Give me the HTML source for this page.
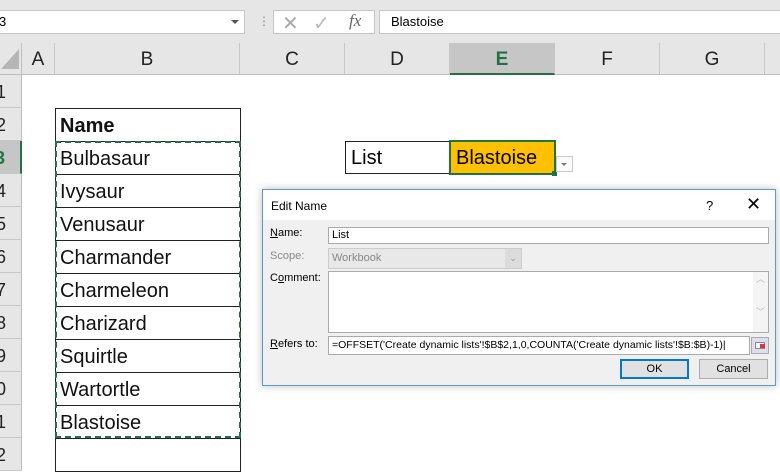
<!DOCTYPE html><html><head><style>
*{margin:0;padding:0;box-sizing:border-box}
body{width:780px;height:470px;overflow:hidden;background:#fff;font-family:"Liberation Sans",sans-serif;position:relative}
.a{position:absolute}
.ch{position:absolute;top:43px;height:32px;background:#e6e6e6;border-right:1px solid #c8c8c8;border-bottom:1px solid #bdbdbd;font-size:19px;text-align:center;line-height:34px;color:#222}
.rh{position:absolute;left:0;width:22px;height:33px;background:#e6e6e6;border-bottom:1px solid #c8c8c8;border-right:1px solid #bdbdbd;font-size:18px;line-height:34px;text-align:right;padding-right:15px;color:#222;overflow:hidden;white-space:nowrap;direction:rtl}
.cell{position:absolute;left:55px;width:186px;height:34px;border:1px solid #222;font-size:20px;line-height:34px;padding-left:4px;color:#111}
.d{font-size:11px;color:#000}
</style></head><body>
<div class="a" style="left:0;top:0;width:780px;height:43px;background:#e6e6e6"></div>
<div class="a" style="left:-2px;top:10px;width:247px;height:24px;background:#fff;border:1px solid #c6c6c6;font-size:13px;line-height:22px">3</div>
<div class="a" style="left:231px;top:20px;border-left:4px solid transparent;border-right:4px solid transparent;border-top:4px solid #555"></div>
<div class="a" style="left:258px;top:14px;color:#888;font-size:12px">⋮</div>
<div class="a" style="left:273px;top:10px;width:102px;height:24px;background:#fff;border:1px solid #c6c6c6"></div>
<div class="a" style="left:282px;top:11px;color:#aaa;font-size:20px">✕</div>
<div class="a" style="left:313px;top:11px;color:#bbb;font-size:20px">✓</div>
<div class="a" style="left:349px;top:11px;color:#666;font-size:17px;font-style:italic;font-family:'Liberation Serif',serif">fx</div>
<div class="a" style="left:379px;top:10px;width:410px;height:24px;background:#fff;border:1px solid #c6c6c6;font-size:13px;line-height:22px;padding-left:11px">Blastoise</div>
<div class="a" style="left:0;top:43px;width:22px;height:32px;background:#e6e6e6;border-right:1px solid #bdbdbd;border-bottom:1px solid #bdbdbd"></div>
<div class="a" style="left:1px;top:49px;border-left:18px solid transparent;border-bottom:20px solid #b5b5b5"></div>
<div class="ch" style="left:22px;width:33px">A</div>
<div class="ch" style="left:55px;width:185px">B</div>
<div class="ch" style="left:240px;width:105px">C</div>
<div class="ch" style="left:345px;width:105px">D</div>
<div class="ch" style="left:450px;width:105px;background:#c6c6c6;color:#217346;font-weight:bold;border-bottom:2px solid #217346">E</div>
<div class="ch" style="left:555px;width:105px">F</div>
<div class="ch" style="left:660px;width:105px">G</div>
<div class="ch" style="left:765px;width:20px"></div>
<div class="rh" style="top:75px">1</div><div class="rh" style="top:108px">2</div>
<div class="rh" style="top:141px;background:#c6c6c6;color:#217346;font-weight:bold;border-right:2px solid #217346">3</div>
<div class="rh" style="top:174px">4</div><div class="rh" style="top:207px">5</div><div class="rh" style="top:240px">6</div><div class="rh" style="top:273px">7</div><div class="rh" style="top:306px">8</div><div class="rh" style="top:339px">9</div><div class="rh" style="top:372px">10</div><div class="rh" style="top:405px">11</div><div class="rh" style="top:438px">12</div>
<div class="cell" style="top:108px;font-weight:bold">Name</div>
<div class="cell" style="top:141px">Bulbasaur</div>
<div class="cell" style="top:174px">Ivysaur</div>
<div class="cell" style="top:207px">Venusaur</div>
<div class="cell" style="top:240px">Charmander</div>
<div class="cell" style="top:273px">Charmeleon</div>
<div class="cell" style="top:306px">Charizard</div>
<div class="cell" style="top:339px">Squirtle</div>
<div class="cell" style="top:372px">Wartortle</div>
<div class="cell" style="top:405px">Blastoise</div>
<div class="cell" style="top:438px"></div>
<div class="a" style="left:55px;top:141px;width:186px;height:297px;border:2px dashed #217346"></div>
<div class="a" style="left:345px;top:141px;width:106px;height:33px;border:1px solid #222;font-size:20px;line-height:33px;padding-left:5px">List</div>
<div class="a" style="left:449px;top:140px;width:107px;height:35px;background:#ffc000;border:2px solid #217346;font-size:20px;line-height:33px;padding-left:5px">Blastoise</div>
<div class="a" style="left:552px;top:171px;width:5px;height:5px;background:#217346"></div>
<div class="a" style="left:556px;top:156px;width:17px;height:16px;border:1px solid #ccc;background:#fafafa"></div>
<div class="a" style="left:561px;top:163px;border-left:3px solid transparent;border-right:3px solid transparent;border-top:3px solid #777"></div>
<div class="a" style="left:262px;top:189px;width:514px;height:197px;background:#f0f0f0;border:1px solid #5a9bd5;box-shadow:0 0 8px rgba(0,0,0,.25)">
<div class="a" style="left:0;top:0;width:512px;height:30px;background:#fff"></div>
<div class="a d" style="left:8px;top:9px;font-size:12px">Edit Name</div>
<div class="a d" style="left:443px;top:8px;font-size:13px">?</div>
<div class="a d" style="left:483px;top:4px;font-size:18px">✕</div>
<div class="a d" style="left:7px;top:37px"><u>N</u>ame:</div>
<div class="a" style="left:65px;top:37px;width:441px;height:17px;background:#fff;border:1px solid #aaa;font-size:11px;padding-left:3px;line-height:15px">List</div>
<div class="a d" style="left:7px;top:60px;color:#888">Scope:</div>
<div class="a" style="left:65px;top:58px;width:194px;height:21px;background:#e8e8e8;border:1px solid #ccc;font-size:11px;color:#888;padding-left:3px;line-height:19px">Workbook</div>
<div class="a" style="left:242px;top:59px;width:16px;height:19px;background:#dcdcdc;color:#999;font-size:9px;text-align:center;line-height:19px">⌄</div>
<div class="a d" style="left:7px;top:82px">C<u>o</u>mment:</div>
<div class="a" style="left:65px;top:81px;width:441px;height:62px;background:#fff;border:1px solid #aaa"></div>
<div class="a" style="left:490px;top:82px;width:15px;height:60px;background:#f4f4f4;color:#bbb;font-size:9px;text-align:center">︿<br><br><br>﹀</div>
<div class="a d" style="left:7px;top:148px"><u>R</u>efers to:</div>
<div class="a" style="left:65px;top:146px;width:422px;height:19px;background:#fff;border:1px solid #aaa;font-size:10.5px;padding-left:3px;line-height:17px;white-space:nowrap;overflow:hidden">=OFFSET('Create dynamic lists'!$B$2,1,0,COUNTA('Create dynamic lists'!$B:$B)-1)|</div>
<div class="a" style="left:488px;top:147px;width:18px;height:17px;background:#dde;border:1px solid #aaa"><div style="margin:4px 3px;width:10px;height:7px;border:1px solid #889;background:#fff"><div style="margin:1px 0 0 4px;width:5px;height:4px;background:#d33"></div></div></div>
<div class="a" style="left:357px;top:169px;width:69px;height:20px;background:#e1e1e1;border:2px solid #0078d7;font-size:11px;text-align:center;line-height:16px">OK</div>
<div class="a" style="left:436px;top:169px;width:69px;height:20px;background:#e1e1e1;border:1px solid #adadad;font-size:11px;text-align:center;line-height:18px">Cancel</div>
</div>
</body></html>
